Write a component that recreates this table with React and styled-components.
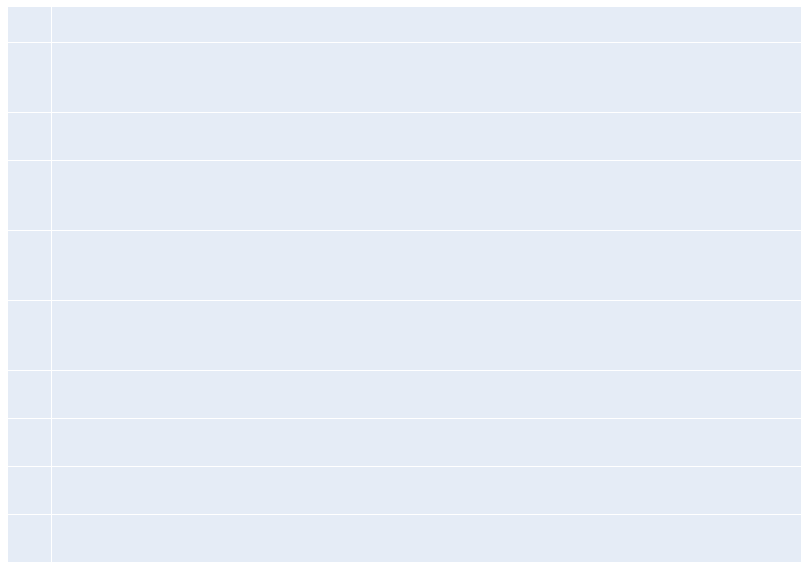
import React from "react";
import styled, { createGlobalStyle } from "styled-components";

const Global = createGlobalStyle`
  html, body { margin: 0; padding: 0; background: #ffffff; }
  body { font-family: "Open Sans", "Liberation Sans", sans-serif; }
`;

const Page = styled.div`
  padding: 7px 0 0 8px;
`;

const Table = styled.div`
  display: grid;
  width: 793px;
  grid-template-columns: 43px 1fr;
  gap: 1px;
  background: #ffffff;
`;

const Cell = styled.div`
  background: #e5ecf6;
  height: ${(p) => p.$h}px;
`;

const rows = [35, 69, 47, 69, 69, 69, 47, 47, 47, 47];

export default function App() {
  return (
    <>
      <Global />
      <Page>
        <Table>
          {rows.map((h, i) => (
            <React.Fragment key={i}>
              <Cell $h={h} />
              <Cell $h={h} />
            </React.Fragment>
          ))}
        </Table>
      </Page>
    </>
  );
}
